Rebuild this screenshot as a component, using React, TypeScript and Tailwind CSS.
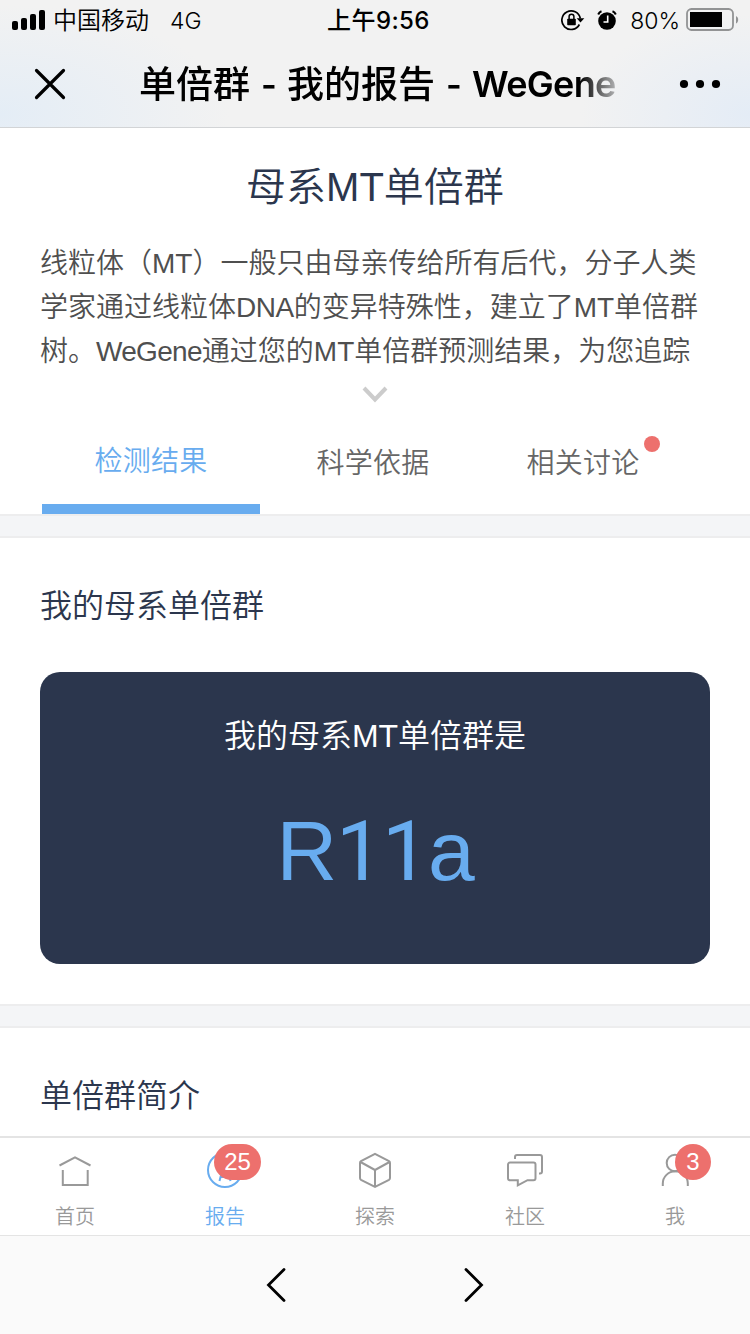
import { ReactNode } from "react";

const Signal = () => (
  <svg width="34" height="20" viewBox="0 0 34 20">
    <rect x="0" y="11" width="6" height="9" rx="2" />
    <rect x="9" y="8" width="6" height="12" rx="2" />
    <rect x="18" y="4" width="6" height="16" rx="2" />
    <rect x="27" y="0" width="6" height="20" rx="2" />
  </svg>
);

const RotationLock = () => (
  <svg width="24" height="22" viewBox="0 0 24 22">
    <path
      d="M18.4 15.5A9.3 9.3 0 1 1 19.3 9.5"
      fill="none"
      stroke="black"
      strokeWidth="1.7"
    />
    <path d="M15.7 9.3h7.6l-3.8 4.2z" />
    <rect x="6.2" y="9.7" width="8.6" height="6.5" rx="0.8" />
    <path
      d="M8.1 10V7.6a2.4 2.4 0 0 1 4.8 0V10"
      fill="none"
      stroke="black"
      strokeWidth="1.5"
    />
  </svg>
);

const Alarm = () => (
  <svg width="20" height="20" viewBox="0 0 20 20">
    <circle cx="10" cy="11" r="8.8" />
    <path
      d="M1.2 4.5A6 6 0 0 1 4.5 1.3M18.8 4.5A6 6 0 0 0 15.5 1.3"
      fill="none"
      stroke="black"
      strokeWidth="2"
    />
    <path d="M10.7 5.6V12H6.5" fill="none" stroke="white" strokeWidth="1.6" />
  </svg>
);

const Battery = () => (
  <svg width="53" height="24" viewBox="0 0 53 24">
    <rect
      x="1"
      y="1"
      width="46"
      height="21"
      rx="4.5"
      fill="none"
      stroke="#929394"
      strokeWidth="1.8"
    />
    <rect x="4" y="4" width="32" height="15" />
    <path d="M50 8a4.4 4.4 0 0 1 0 7.6z" fill="#929394" />
  </svg>
);

interface TabItem {
  label: string;
  icon: ReactNode;
  active?: boolean;
  badge?: string;
}

const tabItems: TabItem[] = [
  {
    label: "首页",
    icon: (
      <>
        <path d="M4.5 15.5L20 7.3l15.5 8.2" />
        <path d="M7.8 20v15h24.9V20" />
      </>
    ),
  },
  {
    label: "报告",
    active: true,
    badge: "25",
    icon: (
      <>
        <circle cx="20" cy="20" r="17" />
        <path d="M14.5 31l1-4L20 12l4.5 15 1 4M15.5 27h9" />
      </>
    ),
  },
  {
    label: "探索",
    icon: (
      <>
        <path d="M20 3.8l14 7.4q1 .6 1 1.8v15q0 1.2-1 1.8L20 37 6 29.8q-1-.6-1-1.8V13q0-1.2 1-1.8z" />
        <path d="M5.5 12L20 20l14.5-8M20 20v17" />
      </>
    ),
  },
  {
    label: "社区",
    icon: (
      <>
        <path d="M5 12.5h23.5a2 2 0 0 1 2 2v13.7a2 2 0 0 1-2 2h-6L12.8 35.3v-5.1H5a2 2 0 0 1-2-2V14.5a2 2 0 0 1 2-2z" />
        <path d="M10 9V7a2 2 0 0 1 2-2h23a2 2 0 0 1 2 2v14.5a2 2 0 0 1-2 2h-1" />
      </>
    ),
  },
  {
    label: "我",
    badge: "3",
    icon: (
      <>
        <circle cx="20" cy="13" r="8.3" />
        <path d="M7.8 36v-2.5a12.5 12.2 0 0 1 25 0V36" />
      </>
    ),
  },
];

const TitleDash = () => (
  <span className="mx-[11px] inline-block w-[15px] -translate-y-px text-center text-[34px] font-semibold">
    -
  </span>
);

const Header = () => (
  <header className="h-32 shrink-0 border-b border-[#d2d4d6] text-black bg-[radial-gradient(ellipse_230px_110px_at_0%_90%,#e4edf6,transparent),radial-gradient(ellipse_170px_100px_at_100%_90%,#e4ecf6,transparent)] bg-[#f2f2f2]">
    <div className="grid h-10 grid-cols-3 items-center pl-3 pr-[11px] font-[Inter,'Noto_Sans_CJK_SC',sans-serif] text-2xl">
      <div className="flex items-center">
        <Signal />
        <span className="ml-[7px] pt-0.5">中国移动</span>
        <span className="ml-[21px] pt-0.5 text-[23px]">4G</span>
      </div>
      <div className="pt-0.5 pl-[6px] text-center font-medium tracking-[0.4px]">
        上午9:56
      </div>
      <div className="flex items-center justify-end whitespace-nowrap">
        <RotationLock />
        <span className="ml-[12px]">
          <Alarm />
        </span>
        <span className="ml-[13px] mr-[6px] pt-0.5 text-[23px]">80%</span>
        <Battery />
      </div>
    </div>
    <div className="flex h-[87px] items-center">
      <svg
        className="ml-[34px]"
        width="32"
        height="32"
        viewBox="0 0 32 32"
        stroke="black"
        strokeWidth="3.2"
        strokeLinecap="round"
      >
        <path d="M2.5 2.5l27 27M29.5 2.5l-27 27" />
      </svg>
      <h1 className="ml-[73px] w-[495px] overflow-hidden whitespace-nowrap pt-[3px] font-[Inter,'Noto_Sans_CJK_SC',sans-serif] text-[37px] font-medium [mask-image:linear-gradient(to_right,black_440px,transparent_490px)]">
        单倍群
        <TitleDash />
        我的报告
        <TitleDash />
        <span className="inline-block -translate-y-px text-[36px] font-semibold tracking-[-0.7px]">
          WeGene
        </span>
      </h1>
      <svg className="ml-[45px]" width="42" height="10" viewBox="0 0 42 10">
        <circle cx="5" cy="5" r="4.1" />
        <circle cx="21" cy="5" r="4.1" />
        <circle cx="37" cy="5" r="4.1" />
      </svg>
    </div>
  </header>
);

const Divider = () => (
  <div className="h-6 shrink-0 border-y-2 border-[#ededee] bg-[#f4f5f7]" />
);

const TabBar = () => (
  <nav className="grid h-[100px] shrink-0 grid-cols-5 border-t-2 border-b border-[#e4e4e4] bg-white">
    {tabItems.map((item) => (
      <div
        key={item.label}
        className={`flex flex-col items-center pt-3 ${
          item.active ? "text-[#68acef]" : "text-[#999999]"
        }`}
      >
        <div className="relative h-10 w-10">
          <svg
            width="40"
            height="40"
            viewBox="0 0 40 40"
            fill="none"
            stroke="currentColor"
            strokeWidth="2"
          >
            {item.icon}
          </svg>
          {item.badge && (
            <span
              className={`absolute -top-1.5 flex h-9 items-center justify-center rounded-full bg-[#ed706d] text-2xl text-white ${
                item.badge.length > 1 ? "left-[9px] w-[47px]" : "left-5 w-9"
              }`}
            >
              {item.badge}
            </span>
          )}
        </div>
        <span className="mt-[13px] text-xl leading-7">{item.label}</span>
      </div>
    ))}
  </nav>
);

const App = () => {
  return (
    <div className="flex h-[1334px] w-[750px] flex-col overflow-hidden bg-white font-['Liberation_Sans','Noto_Sans_CJK_SC',sans-serif] font-[350] text-[#2b364d]">
      <Header />

      <section className="flex h-[386px] shrink-0 flex-col">
        <h2 className="mt-8 text-center text-[40px] leading-[54px]">
          母系MT单倍群
        </h2>
        <p className="mt-[28px] ml-10 whitespace-nowrap text-[28px] leading-11 text-[#4f4f4f]">
          线粒体（MT）一般只由母亲传给所有后代，分子人类
          <br />
          学家通过线粒体<span className="tracking-[-0.5px]">DNA</span>
          的变异特殊性，建立了MT单倍群
          <br />
          树。<span className="tracking-[-0.7px]">WeGene</span>
          通过您的MT单倍群预测结果，为您追踪
        </p>
        <svg
          className="mx-auto mt-[12px]"
          width="26"
          height="17"
          viewBox="0 0 26 17"
          fill="none"
          stroke="#cccccc"
          strokeWidth="4"
        >
          <path d="M2 2l11 11.5L24 2" />
        </svg>

        <div className="mt-auto ml-[42px] flex h-[102px] text-[28px] leading-[42px] tracking-[0.3px] text-[#666666]">
          <div className="w-[218px] border-b-10 border-[#68acef] pt-[29px] text-center text-[#68acef]">
            检测结果
          </div>
          <div className="w-[226px] pt-[31px] text-center">科学依据</div>
          <div className="w-[194px] pt-[31px] text-center">
            <span className="relative">
              相关讨论
              <i className="absolute top-[-12px] -right-[20px] h-4 w-4 rounded-full bg-[#ed706d]" />
            </span>
          </div>
        </div>
      </section>

      <Divider />

      <section className="h-[466px] shrink-0 px-10">
        <h3 className="pt-[45px] text-[32px] leading-[46px]">我的母系单倍群</h3>
        <div className="mt-[43px] h-[292px] rounded-[20px] bg-[#2b364d] text-center">
          <p className="pt-[41px] text-[32px] leading-[46px] text-white">
            我的母系MT单倍群是
          </p>
          <p className="mt-[42px] text-[84px] leading-[100px] tracking-[-1.2px] text-[#68acef] [font-kerning:none]">
            R<span className="font-[Roboto] font-normal">11</span>a
          </p>
        </div>
      </section>

      <Divider />

      <section className="h-[108px] shrink-0 px-10">
        <h3 className="pt-[45px] text-[32px] leading-[46px]">单倍群简介</h3>
      </section>

      <TabBar />

      <footer className="flex flex-1 items-center justify-center gap-[178px] bg-[#fafafa]">
        <svg
          width="20"
          height="36"
          viewBox="0 0 20 36"
          fill="none"
          stroke="black"
          strokeWidth="2.8"
          strokeLinecap="round"
        >
          <path d="M18 2.5L2.5 18 18 33.5" />
        </svg>
        <svg
          width="20"
          height="36"
          viewBox="0 0 20 36"
          fill="none"
          stroke="black"
          strokeWidth="2.8"
          strokeLinecap="round"
        >
          <path d="M2 2.5L17.5 18 2 33.5" />
        </svg>
      </footer>
    </div>
  );
};

export default App;
